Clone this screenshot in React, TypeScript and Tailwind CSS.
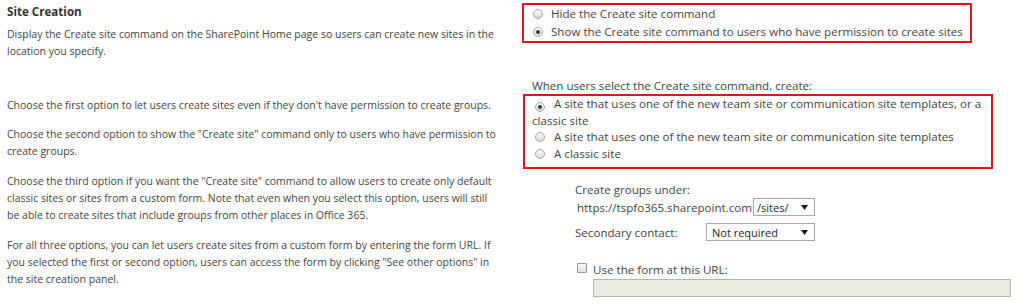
import React from "react";

const Radio = ({ checked }: { checked?: boolean }) => (
  <span className="inline-flex w-[10px] h-[10px] shrink-0 rounded-full border border-[#a8a8a8] bg-linear-to-b from-[#fbfbfb] to-[#d9d9d9] items-center justify-center">
    {checked && <span className="w-[4px] h-[4px] rounded-full bg-[#3a3a3a]" />}
  </span>
);

const Arrow = () => (
  <svg width="7" height="5" viewBox="0 0 7 5" className="shrink-0">
    <polygon points="0,0 7,0 3.5,5" fill="#1a1a1a" />
  </svg>
);

export default function App() {
  return (
    <div
      className="w-[1024px] h-[308px] bg-white flex overflow-hidden text-[#444]"
      style={{ fontFamily: '"Open Sans", "Noto Sans", sans-serif' }}
    >
      {/* Left description column */}
      <div className="w-[520px] shrink-0 pl-[7px] text-[10.5px] leading-[17px] whitespace-nowrap">
        <div className="mt-[3px] font-bold text-[11.6px] text-[#333]">Site Creation</div>
        <p className="mt-[6px]">
          Display the Create site command on the SharePoint Home page so users can create new sites in the
          <br />
          location you specify.
        </p>
        <p className="mt-[37px]">
          Choose the first option to let users create sites even if they don't have permission to create groups.
        </p>
        <p className="mt-[12px]">
          Choose the second option to show the "Create site" command only to users who have permission to
          <br />
          create groups.
        </p>
        <p className="mt-[13px]">
          Choose the third option if you want the "Create site" command to allow users to create only default
          <br />
          classic sites or sites from a custom form. Note that even when you select this option, users will still
          <br />
          be able to create sites that include groups from other places in Office 365.
        </p>
        <p className="mt-[13px]">
          For all three options, you can let users create sites from a custom form by entering the form URL. If
          <br />
          you selected the first or second option, users can access the form by clicking "See other options" in
          <br />
          the site creation panel.
        </p>
      </div>

      {/* Right controls column */}
      <div className="flex-1 flex flex-col text-[11.6px] whitespace-nowrap">
        <div className="ml-[2px] mt-[3px] w-[450px] border-2 border-[#e5121d] pl-[9px]">
          <div className="flex items-center h-[18px]">
            <Radio />
            <span className="ml-[8px]">Hide the Create site command</span>
          </div>
          <div className="flex items-center h-[18px]">
            <Radio checked />
            <span className="ml-[8px]">Show the Create site command to users who have permission to create sites</span>
          </div>
        </div>

        <div className="ml-[12px] mt-[34px] leading-[17px]">When users select the Create site command, create:</div>

        <div className="ml-[3px] w-[470px] border-2 border-[#e5121d] pl-[7px] pb-[5px] leading-[16.5px]">
          <div>
            <span className="inline-flex align-[-1px] ml-[3px] mr-[9px]">
              <Radio checked />
            </span>
            A site that uses one of the new team site or communication site templates, or a
            <br />
            classic site
          </div>
          <div>
            <span className="inline-flex align-[-1px] ml-[3px] mr-[9px]">
              <Radio />
            </span>
            A site that uses one of the new team site or communication site templates
          </div>
          <div>
            <span className="inline-flex align-[-1px] ml-[3px] mr-[9px]">
              <Radio />
            </span>
            A classic site
          </div>
        </div>

        <div className="ml-[55px] flex flex-col leading-[17px]">
          <div className="mt-[12px]">Create groups under:</div>
          <div className="flex items-center">
            <span className="ml-[2px] w-[176px]">https://tspfo365.sharepoint.com</span>
            <div className="w-[62px] h-[18px] border border-[#a9a9a9] bg-white flex items-center justify-between pl-[3px] pr-[6px] text-[11px] text-[#1e1e1e]">
              <span>/sites/</span>
              <Arrow />
            </div>
          </div>
          <div className="mt-[7px] flex items-center">
            <span className="w-[131px]">Secondary contact:</span>
            <div className="w-[109px] h-[18px] border border-[#a9a9a9] bg-white flex items-center justify-between pl-[5px] pr-[6px] text-[11px] text-[#1e1e1e]">
              <span>Not required</span>
              <Arrow />
            </div>
          </div>
          <div className="mt-[20px] flex items-start">
            <span className="ml-[2px] mt-[2px] w-[10px] h-[10px] shrink-0 rounded-[1px] border border-[#9a9a9a] bg-linear-to-b from-[#fbfbfb] to-[#dedede]" />
            <span className="ml-[6px]">Use the form at this URL:</span>
          </div>
          <div className="ml-[18px] mt-[1px] w-[418px] h-[18px] border border-[#b5b5b5] bg-[#ebebe4]" />
        </div>
      </div>
    </div>
  );
}
